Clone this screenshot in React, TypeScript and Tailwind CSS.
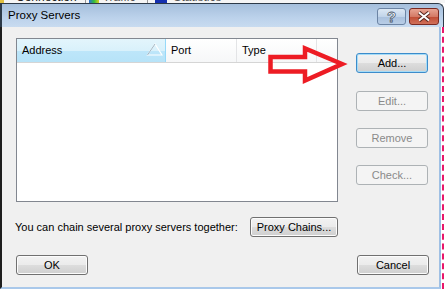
import React from "react";

const font = "font-['Segoe_UI','Liberation_Sans',Arial,sans-serif]";

function WinButton({
  label,
  width = "w-[72px]",
  disabled = false,
  isDefault = false,
}: {
  label: string;
  width?: string;
  disabled?: boolean;
  isDefault?: boolean;
}) {
  if (disabled) {
    return (
      <div
        className={`${width} h-[20px] rounded-[3px] border border-[#adb2b5] bg-[#f4f4f4] flex items-center justify-center text-[11px] text-[#8a8a8a] whitespace-nowrap`}>
        {label}
      </div>
    );
  }
  return (
    <div
      className={`${width} h-[20px] rounded-[3px] border ${
        isDefault
          ? "border-[#3c8ccb] shadow-[inset_0_0_0_1px_#a6dcf7]"
          : "border-[#707070] shadow-[inset_0_0_0_1px_#fcfcfc]"
      } bg-[linear-gradient(to_bottom,#f2f2f2_0%,#ebebeb_50%,#dddddd_51%,#cfcfcf_100%)] flex items-center justify-center text-[11px] text-black whitespace-nowrap`}>
      {label}
    </div>
  );
}

export default function App() {
  return (
    <div
      className={`relative w-[445px] h-[289px] overflow-hidden bg-white ${font} leading-none`}>
      {/* background window peeking above */}
      <div className="h-[3px] overflow-hidden bg-[#f5f5f5]">
        <div className="-mt-[9px] flex items-end text-[12px] leading-[13px] text-[#222] whitespace-nowrap">
          <span className="w-[4px] h-[13px] bg-[#e0c040] mr-[12px]"></span>
          <span className="mr-[8px]">Connection</span>
          <span className="w-px h-[13px] bg-[#999] mr-[3px]"></span>
          <span className="w-[10px] h-[13px] bg-[linear-gradient(to_right,#2a6ad8,#2fbf3a,#d8d020)] mr-[4px]"></span>
          <span className="mr-[12px] text-[#555]">Traffic</span>
          <span className="w-px h-[13px] bg-[#999] mr-[7px]"></span>
          <span className="w-[12px] h-[13px] bg-[#1530b0] mr-[6px]"></span>
          <span className="text-[#555]">Statistics</span>
        </div>
      </div>

      {/* dialog */}
      <div className="flex flex-col h-[286px] w-[445px]">
        {/* title bar */}
        <div className="w-[444px] h-[24px] flex items-center border-t border-l-2 border-r border-[#2d3a48] rounded-tr-[6px] bg-[linear-gradient(to_bottom,#a5bfdc,#bcd2eb_60%,#c8dbf0)] pl-[6px] pr-[4px]">
          <span className="text-[11.5px] text-black whitespace-nowrap">Proxy Servers</span>
          <div className="ml-auto flex gap-[3px] mt-[2px]">
            <div className="w-[29px] h-[17px] rounded-[3px] border border-[#6c84a4] bg-[linear-gradient(to_bottom,#dce8f4,#c1d4ea_50%,#a9c0dd_51%,#b8cde6)] flex items-center justify-center">
              <span className="text-[15px] font-bold text-white [-webkit-text-stroke:0.8px_#4a5a6e] leading-none">
                ?
              </span>
            </div>
            <div className="w-[30px] h-[17px] rounded-[3px] border border-[#7a2a22] bg-[linear-gradient(to_bottom,#e8a493,#d47a66_50%,#c04b33_51%,#d0705a)] flex items-center justify-center">
              <svg width="14" height="11" viewBox="0 0 14 11">
                <path d="M2 1.5 L12 9.5 M12 1.5 L2 9.5" stroke="#5a2a22" strokeWidth="4" />
                <path d="M2 1.5 L12 9.5 M12 1.5 L2 9.5" stroke="#ffffff" strokeWidth="2" />
              </svg>
            </div>
          </div>
        </div>

        {/* body */}
        <div className="flex-1 flex">
          <div className="w-[441px] flex flex-col bg-[#f0f0f0] border-l-2 border-[#1e1e1e] border-r-2 border-r-[#9fc0e4] border-b-2 border-b-[#a9c8ea] pl-[14px] pt-[11px]">
            <div className="flex">
              {/* list view */}
              <div className="w-[322px] h-[164px] border border-[#828790] bg-white">
                <div className="h-[24px] flex text-[11px] text-black border-b border-[#d5d5d5] bg-[linear-gradient(to_bottom,#ffffff,#f6f7f8)]">
                  <div className="w-[149px] flex items-center pl-[5px] border-r border-[#96d9f9] bg-[linear-gradient(to_bottom,#e3f5fc,#d9f1fb_50%,#bde6fa_51%,#b7e3f8)]">
                    Address
                    <svg className="ml-auto mr-[2px] mt-[-2px]" width="17" height="13" viewBox="0 0 17 13">
                      <path d="M1.5 12 L9 1 L16 12 Z" fill="none" stroke="#ffffff" strokeWidth="1.2" />
                      <path d="M1.5 12 L9 1" fill="none" stroke="#8aa2b2" strokeWidth="0.8" />
                    </svg>
                  </div>
                  <div className="w-[71px] flex items-center pl-[5px] border-r border-[#e3e4e6]">
                    Port
                  </div>
                  <div className="w-[80px] flex items-center pl-[5px] border-r border-[#e3e4e6]">
                    Type
                  </div>
                  <div className="flex-1"></div>
                </div>
              </div>

              {/* side buttons */}
              <div className="ml-[18px] pt-[15px] flex flex-col">
                <WinButton label="Add..." isDefault />
                <div className="mt-[18px]">
                  <WinButton label="Edit..." disabled />
                </div>
                <div className="mt-[17px]">
                  <WinButton label="Remove" disabled />
                </div>
                <div className="mt-[17px]">
                  <WinButton label="Check..." disabled />
                </div>
              </div>
            </div>

            <div className="mt-[15px] w-[323px] -ml-px flex items-center">
              <span className="text-[11px] text-black whitespace-nowrap">
                You can chain several proxy servers together:
              </span>
              <div className="ml-auto">
                <WinButton label="Proxy Chains..." width="w-[88px]" />
              </div>
            </div>

            <div className="mt-[18px] flex justify-between pr-[10px]">
              <WinButton label="OK" />
              <WinButton label="Cancel" />
            </div>
          </div>
          <div className="w-[4px] pl-px">
            <div className="w-[2px] h-full border-l-2 border-dashed border-[#e8186a]"></div>
          </div>
        </div>
      </div>

      {/* red annotation arrow */}
      <svg
        className="absolute inset-0 pointer-events-none"
        width="445"
        height="289"
        viewBox="0 0 445 289">
        <polygon
          points="270.5,57 305,57 305,48.5 342,64 305,80.5 305,71.5 270.5,71.5"
          fill="none"
          stroke="#ed1c24"
          strokeWidth="4.5"
          strokeLinejoin="miter"
        />
      </svg>
    </div>
  );
}
